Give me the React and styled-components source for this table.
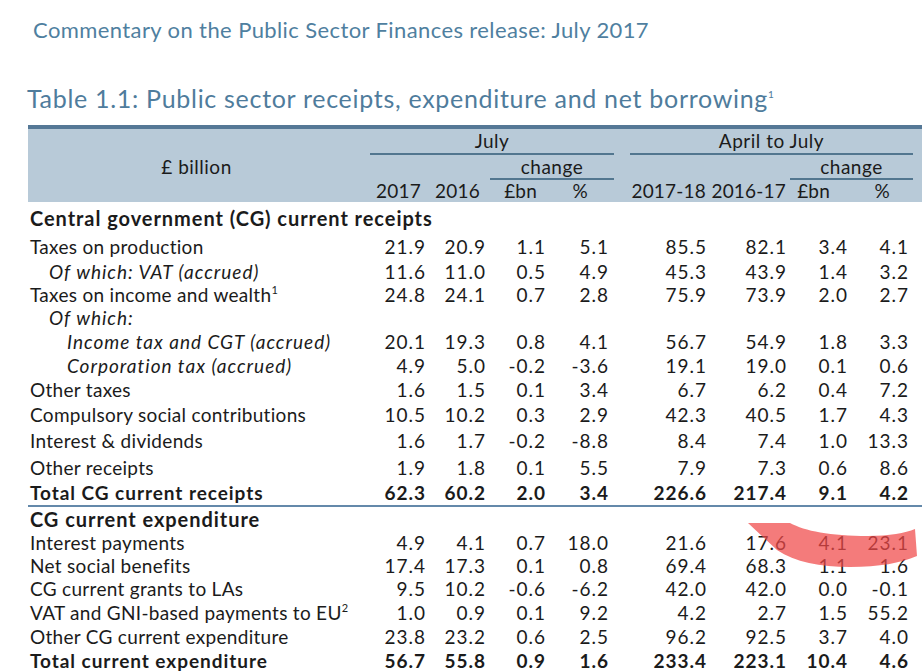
import React from 'react';
import styled, { createGlobalStyle, css } from 'styled-components';

const GlobalStyle = createGlobalStyle`
  html, body {
    margin: 0;
    padding: 0;
    background: #fff;
  }
  body {
    font-family: Lato, 'Open Sans', sans-serif;
    color: #1b1b1b;
  }
`;

const COLS = '337px 60px 60px 60px 63px 98px 80px 61px 61px 1fr';

const Page = styled.div`
  position: relative;
  width: 922px;
  height: 671px;
  overflow: hidden;
  background: #fff;
`;

const DocTitle = styled.div`
  padding: 18px 0 0 33px;
  font-size: 22px;
  line-height: 24px;
  letter-spacing: 0.4px;
  color: #4f7fa0;
`;

const TableTitle = styled.h2`
  margin: 42px 0 13px 27px;
  font-size: 25px;
  line-height: 28px;
  letter-spacing: 0.7px;
  font-weight: normal;
  color: #4f7c9c;
  sup {
    font-size: 10px;
    vertical-align: 10px;
    line-height: 0;
  }
`;

const TableWrap = styled.div`
  margin-left: 28px;
`;

const Head = styled.div`
  display: grid;
  grid-template-columns: ${COLS};
  grid-template-rows: 26px 25px 22px;
  background: #b8cad8;
  border-top: 4px solid #557896;
  font-size: 19px;
  letter-spacing: 0.5px;
`;

const Unit = styled.div`
  grid-column: 1;
  grid-row: 1 / 4;
  display: flex;
  align-items: center;
  justify-content: center;
  padding-top: 1px;
`;

const Group = styled.div`
  grid-column: ${p => p.$col};
  grid-row: ${p => p.$row};
  margin: ${p => p.$margin};
  border-bottom: 2px solid #52768f;
  text-align: center;
  line-height: ${p => (p.$row === 1 ? '24px' : '23px')};
`;

const YearCell = styled.div`
  grid-row: 3;
  text-align: right;
  padding-right: ${p => p.$pad || 0}px;
  line-height: 22px;
  letter-spacing: 0.2px;
  white-space: nowrap;
`;

const Body = styled.div`
  display: grid;
  grid-template-columns: ${COLS};
  font-size: 19px;
`;

const Row = styled.div`
  display: contents;
  ${p =>
    p.$total &&
    css`
      font-weight: bold;
    `}
`;

const spacing = p => {
  if (p.$bold || p.$total) return '0.95px';
  if (p.$italic) return '1px';
  return '0.3px';
};

const Label = styled.div`
  height: ${p => p.$h}px;
  line-height: ${p => p.$h}px;
  padding-left: ${p => [2, 21, 39][p.$indent || 0]}px;
  font-style: ${p => (p.$italic ? 'italic' : 'normal')};
  font-weight: ${p => (p.$bold ? 'bold' : 'inherit')};
  font-size: ${p => (p.$bold ? '20px' : 'inherit')};
  letter-spacing: ${spacing};
  white-space: nowrap;
  sup {
    font-size: 11px;
    font-style: normal;
    vertical-align: 8px;
    line-height: 0;
  }
`;

const Num = styled.div`
  height: ${p => p.$h}px;
  line-height: ${p => p.$h}px;
  text-align: right;
  letter-spacing: 1px;
  margin-right: -1px;
  white-space: nowrap;
`;

const Filler = styled.div`
  height: ${p => p.$h}px;
`;

const Rule = styled.div`
  grid-column: 1 / -1;
  height: 2px;
  background: #6489aa;
`;

const Stroke = styled.svg`
  position: absolute;
  left: 0;
  top: 0;
  pointer-events: none;
`;

const receipts = [
  { label: 'Taxes on production', h: 26, v: ['21.9', '20.9', '1.1', '5.1', '85.5', '82.1', '3.4', '4.1'] },
  { label: 'Of which: VAT (accrued)', indent: 1, italic: true, h: 24, v: ['11.6', '11.0', '0.5', '4.9', '45.3', '43.9', '1.4', '3.2'] },
  { label: 'Taxes on income and wealth', sup: '1', h: 22, v: ['24.8', '24.1', '0.7', '2.8', '75.9', '73.9', '2.0', '2.7'] },
  { label: 'Of which:', indent: 1, italic: true, h: 23, v: [] },
  { label: 'Income tax and CGT (accrued)', indent: 2, italic: true, h: 25, v: ['20.1', '19.3', '0.8', '4.1', '56.7', '54.9', '1.8', '3.3'] },
  { label: 'Corporation tax (accrued)', indent: 2, italic: true, h: 24, v: ['4.9', '5.0', '-0.2', '-3.6', '19.1', '19.0', '0.1', '0.6'] },
  { label: 'Other taxes', h: 24, v: ['1.6', '1.5', '0.1', '3.4', '6.7', '6.2', '0.4', '7.2'] },
  { label: 'Compulsory social contributions', h: 25, v: ['10.5', '10.2', '0.3', '2.9', '42.3', '40.5', '1.7', '4.3'] },
  { label: 'Interest & dividends', h: 27, v: ['1.6', '1.7', '-0.2', '-8.8', '8.4', '7.4', '1.0', '13.3'] },
  { label: 'Other receipts', h: 27, v: ['1.9', '1.8', '0.1', '5.5', '7.9', '7.3', '0.6', '8.6'] },
  { label: 'Total CG current receipts', total: true, h: 24, v: ['62.3', '60.2', '2.0', '3.4', '226.6', '217.4', '9.1', '4.2'] },
];

const expenditure = [
  { label: 'Interest payments', h: 23, v: ['4.9', '4.1', '0.7', '18.0', '21.6', '17.6', '4.1', '23.1'] },
  { label: 'Net social benefits', h: 23, v: ['17.4', '17.3', '0.1', '0.8', '69.4', '68.3', '1.1', '1.6'] },
  { label: 'CG current grants to LAs', h: 24, v: ['9.5', '10.2', '-0.6', '-6.2', '42.0', '42.0', '0.0', '-0.1'] },
  { label: 'VAT and GNI-based payments to EU', sup: '2', h: 24, v: ['1.0', '0.9', '0.1', '9.2', '4.2', '2.7', '1.5', '55.2'] },
  { label: 'Other CG current expenditure', h: 24, v: ['23.8', '23.2', '0.6', '2.5', '96.2', '92.5', '3.7', '4.0'] },
  { label: 'Total current expenditure', total: true, h: 24, v: ['56.7', '55.8', '0.9', '1.6', '233.4', '223.1', '10.4', '4.6'] },
];

const years = [
  { t: '2017', pad: 4 },
  { t: '2016', pad: 5 },
  { t: '£bn', pad: 8 },
  { t: '%', pad: 20 },
  { t: '2017-18', pad: -4 },
  { t: '2016-17', pad: 0 },
  { t: '£bn', pad: 17 },
  { t: '%', pad: 18 },
];

const DataRow = ({ row }) => (
  <Row $total={row.total}>
    <Label $h={row.h} $indent={row.indent} $italic={row.italic} $total={row.total}>
      {row.label}
      {row.sup && <sup>{row.sup}</sup>}
    </Label>
    {Array.from({ length: 8 }).map((_, i) => (
      <Num key={i} $h={row.h}>
        {row.v[i] || ''}
      </Num>
    ))}
    <Filler $h={row.h} />
  </Row>
);

const SectionRow = ({ label, h }) => (
  <Row>
    <Label $h={h} $bold>
      {label}
    </Label>
    {Array.from({ length: 9 }).map((_, i) => (
      <Filler key={i} $h={h} />
    ))}
  </Row>
);

const App = () => {
  return (
    <Page>
      <GlobalStyle />
      <DocTitle>Commentary on the Public Sector Finances release: July 2017</DocTitle>
      <TableTitle>
        Table 1.1: Public sector receipts, expenditure and net borrowing<sup>1</sup>
      </TableTitle>
      <TableWrap>
        <Head>
          <Unit>£ billion</Unit>
          <Group $col="2 / 6" $row={1} $margin="0 -6px 0 5px">
            July
          </Group>
          <Group $col="6 / 10" $row={1} $margin="0 -5px 0 22px">
            April to July
          </Group>
          <Group $col="4 / 6" $row={2} $margin="0 -6px 0 5px">
            change
          </Group>
          <Group $col="8 / 10" $row={2} $margin="0 -5px 0 4px">
            change
          </Group>
          {years.map((y, i) => (
            <YearCell key={i} $pad={y.pad} style={{ gridColumn: i + 2 }}>
              {y.t}
            </YearCell>
          ))}
        </Head>
        <Body>
          <SectionRow label="Central government (CG) current receipts" h={32} />
          {receipts.map((r, i) => (
            <DataRow key={i} row={r} />
          ))}
          <Rule />
          <SectionRow label="CG current expenditure" h={24} />
          {expenditure.map((r, i) => (
            <DataRow key={i} row={r} />
          ))}
        </Body>
      </TableWrap>
      <Stroke width="922" height="671" viewBox="0 0 922 671">
        <path
          d="M748 523 L790 523 C805 531 830 536 868 536 C890 536 905 533 915 529 L917 556 C900 563 880 567 850 567 C820 567 795 562 777 550 Z"
          fill="#f04848"
          fillOpacity="0.72"
        />
      </Stroke>
    </Page>
  );
};

export default App;
